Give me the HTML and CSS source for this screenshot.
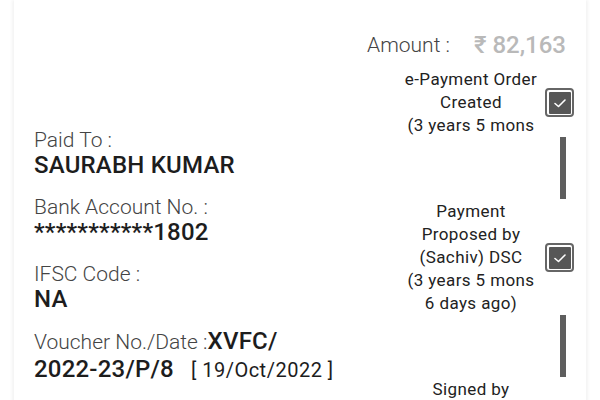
FILE: index.html
```html
<!DOCTYPE html>
<html>
<head>
<meta charset="utf-8">
<link rel="stylesheet" href="styles.css">
</head>
<body>
<div class="card">
  <div class="amount-row">
    <span class="amount-label">Amount :</span>
    <span class="amount-value">₹ 82,163</span>
  </div>
  <div class="body">
    <div class="details">
      <div class="group">
        <div class="label">Paid To :</div>
        <div class="value">SAURABH KUMAR</div>
      </div>
      <div class="group">
        <div class="label">Bank Account No. :</div>
        <div class="value">***********1802</div>
      </div>
      <div class="group">
        <div class="label">IFSC Code :</div>
        <div class="value">NA</div>
      </div>
      <div class="group voucher">
        <div class="label">Voucher No./Date :<b class="value-inline">XVFC/</b></div>
        <div class="value">2022-23/P/8<span class="date">[ 19/Oct/2022 ]</span></div>
      </div>
    </div>
    <div class="timeline">
      <div class="step">
        <div class="step-text">e-Payment Order<br>Created<br>(3 years 5 mons</div>
        <div class="check"><div class="check-fill"><svg viewBox="0 0 22 22" width="22" height="22"><path d="M6 11.5 L9.5 14.5 L16 8" fill="none" stroke="#fff" stroke-width="1.6" stroke-linecap="round" stroke-linejoin="round"/></svg></div></div>
      </div>
      <div class="connector"><div class="bar"></div></div>
      <div class="step">
        <div class="step-text">Payment<br>Proposed by<br>(Sachiv) DSC<br>(3 years 5 mons<br>6 days ago)</div>
        <div class="check"><div class="check-fill"><svg viewBox="0 0 22 22" width="22" height="22"><path d="M6 11.5 L9.5 14.5 L16 8" fill="none" stroke="#fff" stroke-width="1.6" stroke-linecap="round" stroke-linejoin="round"/></svg></div></div>
      </div>
      <div class="connector"><div class="bar"></div></div>
      <div class="step last">
        <div class="step-text">Signed by</div>
      </div>
    </div>
  </div>
</div>
</body>
</html>
```

FILE: styles.css
```css
html, body {
  margin: 0;
  padding: 0;
  background: #fff;
  overflow: hidden;
  height: 400px;
}
body {
  font-family: Roboto, "Liberation Sans", sans-serif;
  color: #222;
}
.card {
  margin: 0 14px;
  padding: 31px 12px 0 20px;
  height: 600px;
  background: #fff;
  box-shadow: -2px 0 3px rgba(0,0,0,0.05), 2px 0 3px rgba(0,0,0,0.05);
}
.amount-row {
  display: flex;
  justify-content: flex-end;
  align-items: center;
  height: 28px;
  padding-right: 8px;
}
.amount-label {
  font-size: 21px;
  font-weight: 300;
  color: #444;
}
.amount-value {
  font-size: 24px;
  font-weight: 500;
  color: #b9b9b9;
  margin-left: 24px;
}
.body {
  display: flex;
  justify-content: space-between;
  margin-top: 9px;
}
.details {
  padding-top: 60px;
}
.group {
  margin-bottom: 17px;
}
.label {
  font-size: 21px;
  font-weight: 300;
  color: #444;
  line-height: 25px;
}
.value {
  font-size: 24px;
  font-weight: 500;
  color: #1d1d1d;
  line-height: 25px;
  letter-spacing: 0.2px;
}
.value-inline {
  font-weight: 500;
  font-size: 24px;
  color: #1d1d1d;
  letter-spacing: 0.2px;
}
.voucher .value {
  line-height: 28px;
}
.date {
  font-weight: 400;
  font-size: 20px;
  margin-left: 17px;
  letter-spacing: 0.5px;
}
.timeline {
  width: 174px;
  display: flex;
  flex-direction: column;
}
.step {
  display: flex;
  align-items: center;
  gap: 3px;
}
.step-text {
  width: 142px;
  text-align: center;
  font-size: 17px;
  line-height: 23px;
  letter-spacing: 0.4px;
  color: #222;
}
.check {
  width: 22px;
  height: 22px;
  border: 2px solid #666;
  border-radius: 4px;
  padding: 1.5px;
  flex: none;
}
.check-fill {
  width: 22px;
  height: 22px;
  background: #575757;
  border-radius: 1px;
}
.check-fill svg {
  display: block;
}
.connector {
  height: 63px;
  padding-left: 160px;
}
.bar {
  width: 6px;
  height: 62px;
  background: #5e5e5e;
}
```
